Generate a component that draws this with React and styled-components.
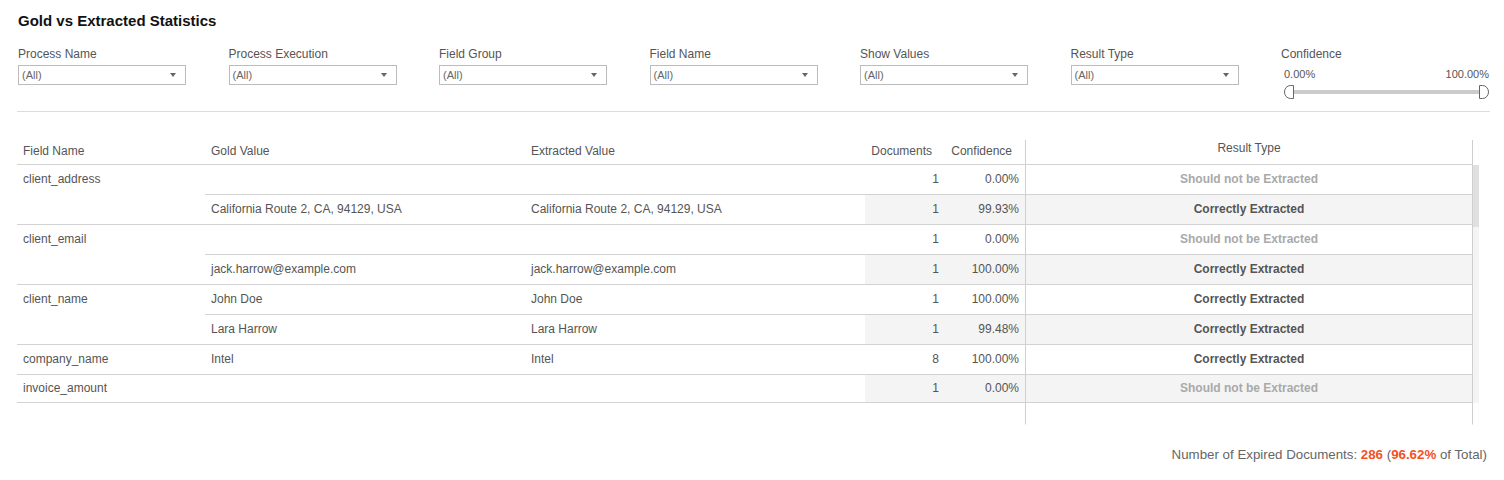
import React from 'react';
import styled, { createGlobalStyle } from 'styled-components';

const GlobalStyle = createGlobalStyle`
  body {
    margin: 0;
    background: #fff;
    font-family: Arial, "Liberation Sans", sans-serif;
  }
`;

const Page = styled.div`
  width: 1504px;
  height: 480px;
  box-sizing: border-box;
  padding-top: 12px;
  overflow: hidden;
`;

const Title = styled.h1`
  margin: 0 0 0 18px;
  font-size: 15px;
  line-height: 18px;
  font-weight: bold;
  color: #111;
`;

const FilterBar = styled.div`
  display: grid;
  grid-template-columns: repeat(6, 210.5px) 208px;
  padding-left: 18px;
  margin-top: 17px;
`;

const Filter = styled.div`
  display: flex;
  flex-direction: column;
`;

const Label = styled.div`
  font-size: 12px;
  line-height: 14px;
  color: #555;
`;

const Dropdown = styled.div`
  margin-top: 4px;
  width: 168px;
  height: 20px;
  box-sizing: border-box;
  border: 1px solid #bcbcbc;
  display: flex;
  align-items: center;
  justify-content: space-between;
  padding: 0 9px 0 3px;
  font-size: 11px;
  color: #666;
`;

const Caret = styled.span`
  width: 0;
  height: 0;
  border-left: 3.5px solid transparent;
  border-right: 3.5px solid transparent;
  border-top: 4px solid #666;
`;

const RangeLabels = styled.div`
  margin-top: 6px;
  display: flex;
  justify-content: space-between;
  padding: 0 0 0 3px;
  font-size: 11px;
  line-height: 14px;
  color: #555;
`;

const Slider = styled.div`
  margin-top: 4px;
  margin-left: 3px;
  height: 14px;
  display: flex;
  align-items: center;
`;

const Track = styled.div`
  flex: 1;
  height: 4px;
  background: #cbcbcb;
`;

const Divider = styled.div`
  margin: 12px 14px 0 17px;
  height: 1px;
  background: #dcdcdc;
`;

const TableWrap = styled.div`
  margin: 28px 0 0 17px;
  display: flex;
`;

const Grid = styled.div`
  display: flex;
  flex-direction: column;
`;

const Row = styled.div`
  display: grid;
  grid-template-columns: 188px 320px 340px 80px 80px 448px;
  height: ${p => p.h}px;
`;

const Cell = styled.div`
  box-sizing: border-box;
  display: flex;
  align-items: center;
  justify-content: ${p => (p.right ? 'flex-end' : 'flex-start')};
  padding: ${p => (p.right ? '0 6px 2px 0' : '0 0 2px 6px')};
  font-size: 12px;
  color: #555;
  white-space: nowrap;
  border-bottom: 1px solid ${p => (p.noLine ? 'transparent' : '#d2d2d2')};
  background: ${p => (p.shade ? '#f4f4f4' : 'transparent')};
`;

const HeadCell = styled(Cell)`
  align-items: flex-start;
  padding-top: 4px;
  padding-right: ${p => (p.right ? '13px' : '0')};
`;

const ResultCell = styled.div`
  box-sizing: border-box;
  display: flex;
  align-items: center;
  justify-content: center;
  padding-bottom: 1px;
  font-size: 12px;
  font-weight: ${p => (p.head ? 'normal' : 'bold')};
  color: ${p => (p.muted ? '#a9a9a9' : '#555')};
  border-left: 1px solid #cfcfcf;
  border-right: 1px solid #cfcfcf;
  border-bottom: 1px solid ${p => (p.noLine ? 'transparent' : '#d2d2d2')};
  background: ${p => (p.shade ? '#f4f4f4' : 'transparent')};
  ${p => p.head && 'align-items: flex-start; padding-top: 1px;'}
`;

const Scrollbar = styled.div`
  margin-top: 25px;
  width: 6px;
  height: 238px;
  background: #f4f4f4;
`;

const Thumb = styled.div`
  height: 62px;
  background: #e0e0e0;
`;

const Footer = styled.div`
  margin-top: 22px;
  padding-right: 17px;
  text-align: right;
  font-size: 13.3px;
  line-height: 16px;
  color: #666;
`;

const Accent = styled.b`
  color: #f4511e;
`;

const filters = ['Process Name', 'Process Execution', 'Field Group', 'Field Name', 'Show Values', 'Result Type'];

const rows = [
  { field: 'client_address', gold: '', docs: 1, conf: '0.00%', ok: false, end: false },
  { field: '', gold: 'California Route 2, CA, 94129, USA', docs: 1, conf: '99.93%', ok: true, end: true },
  { field: 'client_email', gold: '', docs: 1, conf: '0.00%', ok: false, end: false },
  { field: '', gold: 'jack.harrow@example.com', docs: 1, conf: '100.00%', ok: true, end: true },
  { field: 'client_name', gold: 'John Doe', docs: 1, conf: '100.00%', ok: true, end: false },
  { field: '', gold: 'Lara Harrow', docs: 1, conf: '99.48%', ok: true, end: true },
  { field: 'company_name', gold: 'Intel', docs: 8, conf: '100.00%', ok: true, end: true },
  { field: 'invoice_amount', gold: '', docs: 1, conf: '0.00%', ok: false, end: true },
];

const Handle = ({ flip }) => (
  <svg width="10" height="14" viewBox="0 0 10 14" style={{ flex: 'none' }}>
    <path
      d={flip ? 'M0.5 0.5 H3.5 A6 6.5 0 0 1 3.5 13.5 H0.5 Z' : 'M9.5 0.5 H6.5 A6 6.5 0 0 0 6.5 13.5 H9.5 Z'}
      fill="#fff"
      stroke="#666"
      strokeWidth="1"
    />
  </svg>
);

export default function App() {
  return (
    <Page>
      <GlobalStyle />
      <Title>Gold vs Extracted Statistics</Title>
      <FilterBar>
        {filters.map(f => (
          <Filter key={f}>
            <Label>{f}</Label>
            <Dropdown>
              (All)
              <Caret />
            </Dropdown>
          </Filter>
        ))}
        <Filter>
          <Label>Confidence</Label>
          <RangeLabels>
            <span>0.00%</span>
            <span>100.00%</span>
          </RangeLabels>
          <Slider>
            <Handle />
            <Track />
            <Handle flip />
          </Slider>
        </Filter>
      </FilterBar>
      <Divider />
      <TableWrap>
        <Grid>
          <Row h={25}>
            <HeadCell>Field Name</HeadCell>
            <HeadCell>Gold Value</HeadCell>
            <HeadCell>Extracted Value</HeadCell>
            <HeadCell right>Documents</HeadCell>
            <HeadCell right>Confidence</HeadCell>
            <ResultCell head>Result Type</ResultCell>
          </Row>
          {rows.map((r, i) => {
            const shade = i % 2 === 1;
            return (
              <Row key={i} h={i === rows.length - 1 ? 28 : 30}>
                <Cell noLine={!r.end}>{r.field}</Cell>
                <Cell>{r.gold}</Cell>
                <Cell>{r.gold}</Cell>
                <Cell right shade={shade}>{r.docs}</Cell>
                <Cell right shade={shade}>{r.conf}</Cell>
                <ResultCell shade={shade} muted={!r.ok}>
                  {r.ok ? 'Correctly Extracted' : 'Should not be Extracted'}
                </ResultCell>
              </Row>
            );
          })}
          <Row h={22}>
            <Cell noLine />
            <Cell noLine />
            <Cell noLine />
            <Cell noLine />
            <Cell noLine />
            <ResultCell noLine />
          </Row>
        </Grid>
        <Scrollbar>
          <Thumb />
        </Scrollbar>
      </TableWrap>
      <Footer>
        Number of Expired Documents: <Accent>286</Accent> (<Accent>96.62%</Accent> of Total)
      </Footer>
    </Page>
  );
}
